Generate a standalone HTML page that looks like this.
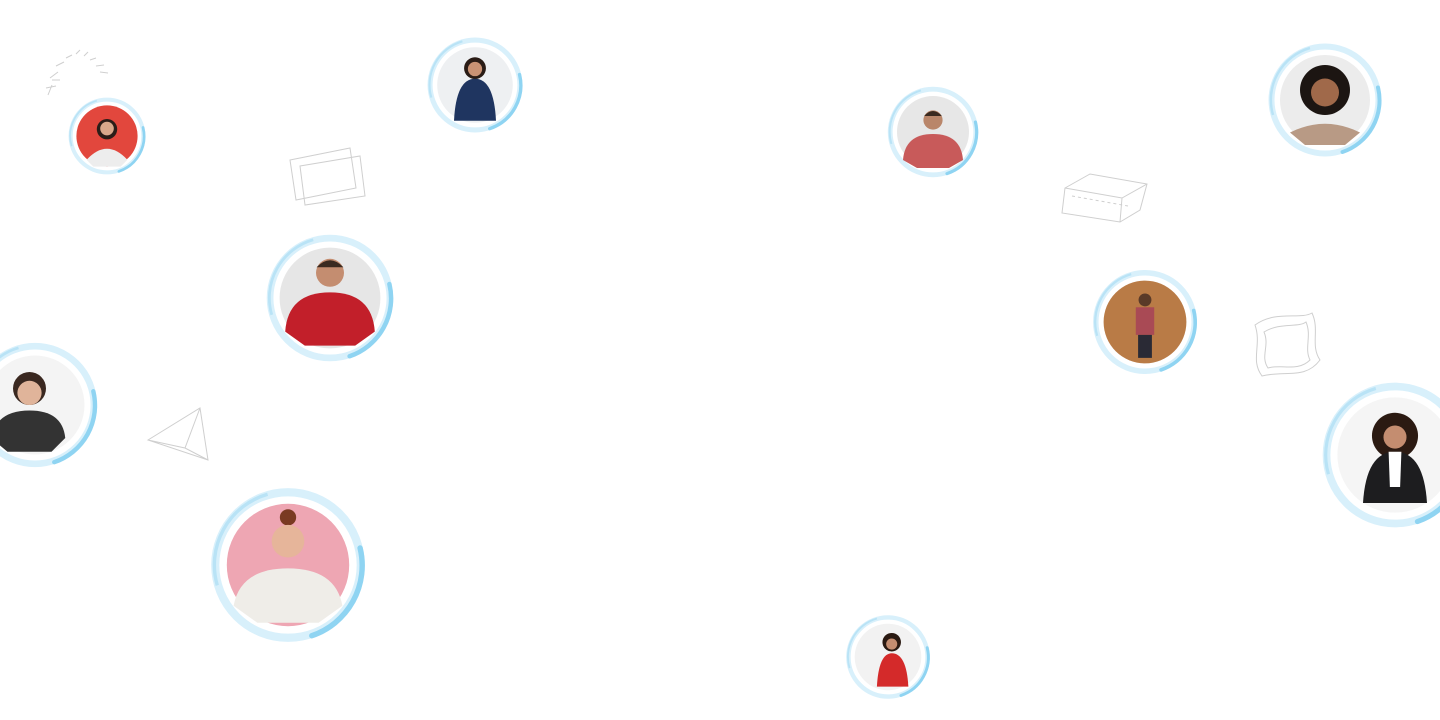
<!DOCTYPE html>
<html><head><meta charset="utf-8"><style>
html,body{margin:0;padding:0;background:#fff;width:1440px;height:720px;overflow:hidden}
svg{display:block}
</style></head><body>
<svg width="1440" height="720" viewBox="0 0 1440 720" xmlns="http://www.w3.org/2000/svg">
<defs>
<g id="ring">
<circle r="1.07" fill="none" stroke="#d8f0fb" stroke-width="0.12"/>
<path d="M0.35,1.04 A1.09,1.09 0 0 0 1.06,-0.25" fill="none" stroke="#8fd4f2" stroke-width="0.08" stroke-linecap="round"/>
<path d="M-1.04,0.3 A1.08,1.08 0 0 1 -0.3,-1.04" fill="none" stroke="#b9e3f6" stroke-width="0.05"/>
<circle r="0.99" fill="#fff"/>
</g>
</defs>
<g fill="none" stroke="#cfcfcf" stroke-width="1">
<path d="M48,95 L52,85 M50,78 L58,72 M56,66 L64,62 M66,58 L72,55 M76,54 L80,50 M84,56 L88,52 M90,60 L96,58 M96,66 L104,65 M100,72 L108,73 M46,88 L56,86 M52,80 L60,80"/>
<path d="M290,160 L350,148 L356,188 L296,200 Z M300,166 L360,156 L365,196 L305,205 Z"/>
<path d="M1065,188 L1090,174 L1147,184 L1140,210 L1120,222 L1062,213 Z M1065,188 L1122,198 L1147,184 M1122,198 L1120,222" />
<path d="M1072,196 L1128,206" stroke-dasharray="3,3"/>
<path d="M148,440 L200,408 L208,460 Z M148,440 L185,448 L200,408 M185,448 L208,460"/>
<path d="M1255,325 C1275,310 1300,320 1312,313 C1320,330 1310,345 1320,360 C1305,380 1285,370 1262,376 C1250,360 1262,345 1255,325 Z"/>
<path d="M1264,332 C1280,322 1298,328 1306,322 C1312,336 1304,348 1310,360 C1298,372 1282,364 1268,368 C1260,356 1270,346 1264,332 Z"/>
</g>
<g transform="translate(107,136) scale(34)"><use href="#ring"/><circle r="0.9" fill="#e2473d"/>
<circle cx="0" cy="-0.2" r="0.3" fill="#2b1d18"/><circle cx="0" cy="-0.22" r="0.2" fill="#d9a88b"/><path d="M-0.6,0.7 Q0,0.05 0.6,0.7 L0.4,0.9 L-0.4,0.9Z" fill="#ededed"/></g>
<g transform="translate(475,85) scale(42)"><use href="#ring"/><circle r="0.9" fill="#eef0f2"/>
<circle cx="0" cy="-0.4" r="0.26" fill="#2a1c16"/><circle cx="0" cy="-0.38" r="0.17" fill="#c99274"/><path d="M-0.5,0.85 Q-0.45,-0.15 0,-0.15 Q0.45,-0.15 0.5,0.85Z" fill="#1f3560"/></g>
<g transform="translate(933,132) scale(40)"><use href="#ring"/><circle r="0.9" fill="#e7e7e7"/>
<circle cx="0" cy="-0.3" r="0.24" fill="#b9866a"/><path d="M-0.22,-0.4 Q0,-0.65 0.22,-0.4Z" fill="#3a2a20"/><path d="M-0.75,0.7 Q-0.7,0.05 0,0.05 Q0.7,0.05 0.75,0.7 L0.4,0.9 L-0.4,0.9Z" fill="#c85a5a"/></g>
<g transform="translate(1325,100) scale(50)"><use href="#ring"/><circle r="0.9" fill="#ececec"/>
<circle cx="0" cy="-0.2" r="0.5" fill="#1c1512"/><circle cx="0" cy="-0.15" r="0.28" fill="#a0694a"/><path d="M-0.7,0.65 Q0,0.3 0.7,0.65 L0.4,0.9 L-0.4,0.9Z" fill="#b89a85"/></g>
<g transform="translate(330,298) scale(56)"><use href="#ring"/><circle r="0.9" fill="#e6e6e6"/>
<circle cx="0" cy="-0.45" r="0.25" fill="#c48d70"/><path d="M-0.24,-0.55 Q0,-0.8 0.24,-0.55Z" fill="#3a2a20"/><path d="M-0.8,0.6 Q-0.75,-0.1 0,-0.1 Q0.75,-0.1 0.8,0.6 L0.45,0.85 L-0.45,0.85Z" fill="#c21f2a"/></g>
<g transform="translate(1145,322) scale(46)"><use href="#ring"/><circle r="0.9" fill="#b97b46"/>
<circle cx="0" cy="-0.48" r="0.14" fill="#5a3a28"/><rect x="-0.2" y="-0.32" width="0.4" height="0.6" fill="#a94a55"/><rect x="-0.15" y="0.28" width="0.3" height="0.5" fill="#2a2a35"/></g>
<g transform="translate(35,405) scale(55)"><use href="#ring"/><circle r="0.9" fill="#f4f4f4"/>
<circle cx="-0.1" cy="-0.3" r="0.3" fill="#3a2820"/><circle cx="-0.1" cy="-0.22" r="0.22" fill="#e0b49a"/><path d="M-0.8,0.6 Q-0.7,0.1 -0.1,0.1 Q0.5,0.1 0.55,0.6 L0.3,0.85 L-0.5,0.85Z" fill="#333"/></g>
<g transform="translate(1395,455) scale(64)"><use href="#ring"/><circle r="0.9" fill="#f5f5f5"/>
<circle cx="0" cy="-0.3" r="0.36" fill="#2b1a12"/><circle cx="0" cy="-0.28" r="0.18" fill="#c48d70"/><path d="M-0.5,0.75 Q-0.45,-0.05 0,-0.05 Q0.45,-0.05 0.5,0.75Z" fill="#1d1d1f"/><path d="M-0.1,-0.05 L0.1,-0.05 L0.08,0.5 L-0.08,0.5Z" fill="#fff"/></g>
<g transform="translate(288,565) scale(68)"><use href="#ring"/><circle r="0.9" fill="#eea6b3"/>
<circle cx="0" cy="-0.7" r="0.12" fill="#7a3a22"/><circle cx="0" cy="-0.35" r="0.24" fill="#e6b59a"/><path d="M-0.8,0.6 Q-0.7,0.05 0,0.05 Q0.7,0.05 0.8,0.6 L0.45,0.85 L-0.45,0.85Z" fill="#efede8"/></g>
<g transform="translate(888,657) scale(37)"><use href="#ring"/><circle r="0.9" fill="#f2f2f2"/>
<circle cx="0.1" cy="-0.4" r="0.25" fill="#2a1a12"/><circle cx="0.1" cy="-0.35" r="0.15" fill="#c48d70"/><path d="M-0.3,0.8 Q-0.25,-0.1 0.1,-0.1 Q0.5,-0.1 0.55,0.8Z" fill="#d42a2a"/></g>
</svg>
</body></html>
